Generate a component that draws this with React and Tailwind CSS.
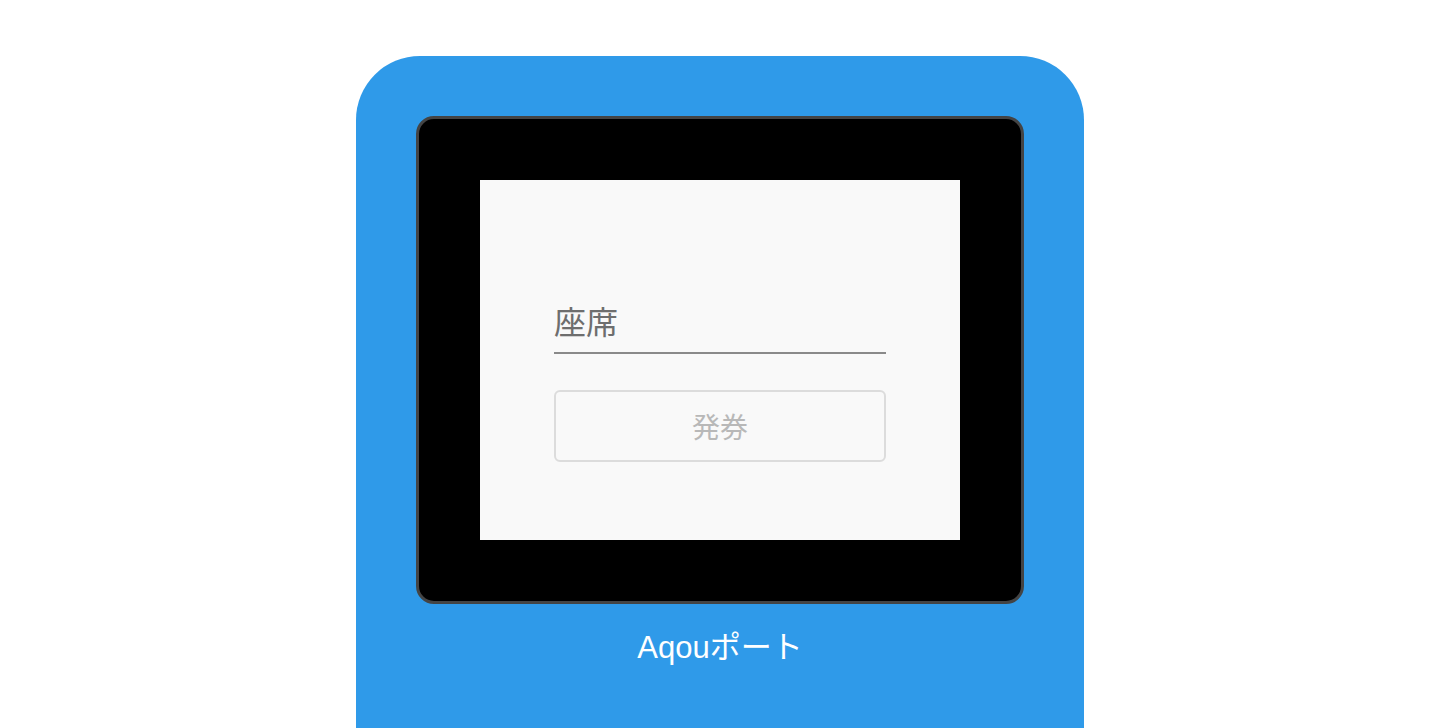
import React from 'react';

const App = () => {
  return (
    <div className="w-full h-[728px] overflow-hidden bg-white flex justify-center pt-[56px]" style={{ fontFamily: '"Liberation Sans", "Noto Sans CJK JP", sans-serif' }}>
      {/* Device body */}
      <div className="w-[728px] h-[672px] bg-[#2f9ae9] rounded-t-[64px] flex flex-col items-center pt-[60px]">
        {/* Screen bezel */}
        <div className="w-[608px] h-[488px] bg-black border-[3px] border-[#444] rounded-[18px] flex items-center justify-center">
          <div className="w-[480px] h-[360px] bg-[#f9f9f9] px-[74px] pt-[118px]">
            <input
              type="text"
              placeholder="座席"
              className="w-full h-[56px] pb-[10px] bg-transparent border-b-2 border-[#8a8a8a] text-[32px] text-[#666] placeholder:text-[#6e6e6e] outline-none"
              style={{ fontFamily: '"Noto Sans CJK JP", sans-serif' }}
            />
            <button
              disabled
              className="mt-[36px] w-full h-[72px] border-2 border-[#dcdcdc] rounded-[6px] text-[28px] text-[#b8b8b8] bg-transparent"
              style={{ fontFamily: '"Noto Sans CJK JP", sans-serif' }}
            >
              発券
            </button>
          </div>
        </div>
        <div className="mt-[24px] text-white text-[31px] leading-[40px]">Aqouポート</div>
      </div>
    </div>
  );
};

export default App;
